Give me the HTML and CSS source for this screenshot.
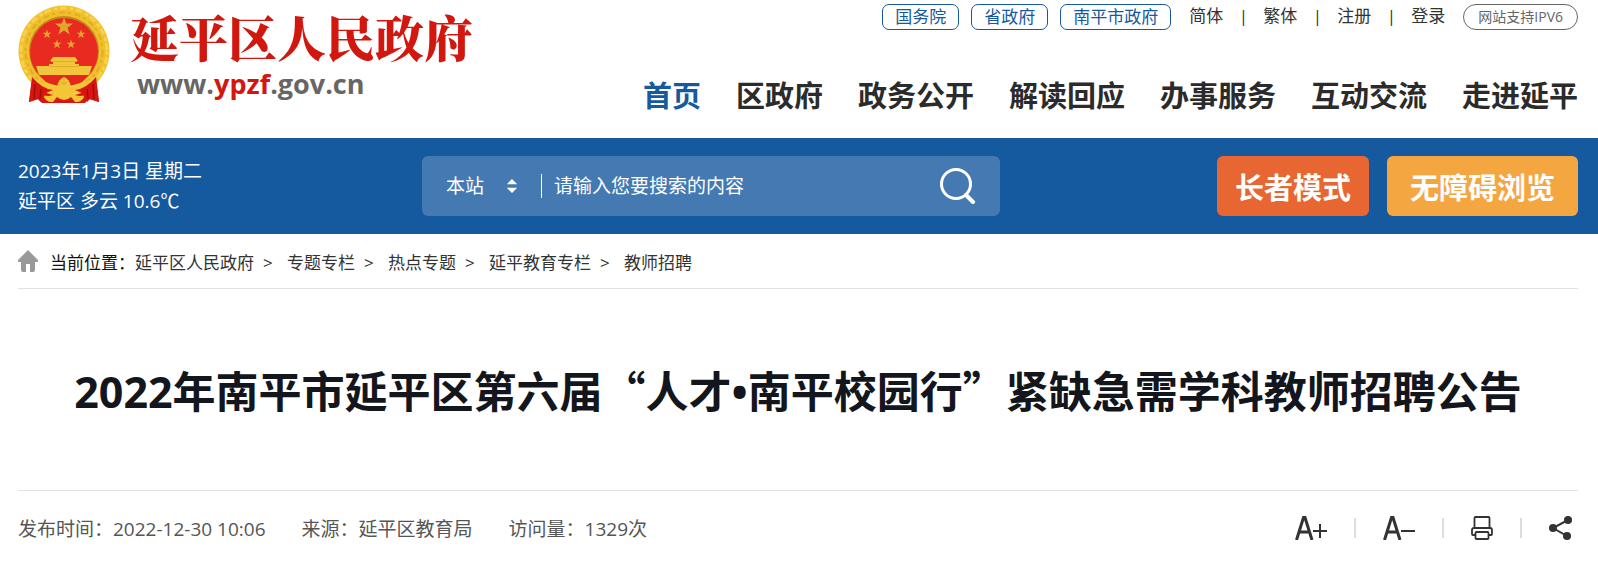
FILE: index.html
```html
<!DOCTYPE html>
<html lang="zh-CN">
<head>
  <meta charset="utf-8">
  <meta name="viewport" content="width=device-width, initial-scale=1.0">
  <title>2022年南平市延平区第六届“人才•南平校园行”紧缺急需学科教师招聘公告</title>
  <link rel="stylesheet" href="styles.css">
</head>
<body>

  <header class="header wrap">
    <a class="logo" href="#">
      <svg class="emblem" viewBox="0 0 92 98" aria-hidden="true">
        <path d="M14 74 L32 76 L60 76 L78 74 L81 97 L71 94 L67 98 L24 98 L20 94 L11 97 Z" fill="#d8150f"/>
        <circle cx="46" cy="46" r="45.500" fill="#efbf2e"/>
        <circle cx="46" cy="46" r="43" fill="none" stroke="#f7d24a" stroke-width="3" stroke-dasharray="4 2 7 3"/>
        <circle cx="46" cy="46" r="38.500" fill="none" stroke="#e3ab22" stroke-width="2" stroke-dasharray="6 3 3 4"/>
        <circle cx="46" cy="46" r="35" fill="#c08a1c"/>
        <circle cx="46" cy="47" r="34" fill="#e92a20"/>
        <g fill="#dfa52c">
          <path id="star" d="M46 12 L48.200 18.500 L55 18.600 L49.600 22.700 L51.600 29.400 L46 25.400 L40.400 29.400 L42.400 22.700 L37 18.600 L43.800 18.500 Z"/>
          <use href="#star" transform="translate(6 18.500) scale(.5)"/>
          <use href="#star" transform="translate(40 18.500) scale(.5)"/>
          <use href="#star" transform="translate(16 28.500) scale(.5)"/>
          <use href="#star" transform="translate(30 28.500) scale(.5)"/>
        </g>
        <path d="M35 52 H57 L60 56 H57 V59 H61 V61 H74 L71 70 H21 L18 61 H31 V59 H35 V56 H32 Z" fill="#f2c53b"/>
        <path d="M33 56.500 H59 M31 61.500 H61" stroke="#e3ab2c" stroke-width="1"/>
        <path d="M21 70 H71 L64 77 Q46 85 28 77 Z" fill="#e5261c"/>
        <path d="M12 70 Q24 79 39 81 Q41 74 46 72 Q51 74 53 81 Q68 79 80 70 L76 80 Q64 88 54 88 L46 91 L38 88 Q28 88 16 80 Z" fill="#f4c636"/>
        <path d="M46 80 L41 75 M46 80 V74 M46 80 L51 75" stroke="#dfa52c" stroke-width="1"/>
        <path d="M25 90 Q35 93 40 86 Q46 92 52 86 Q57 93 67 90 Q64 98 57 97 L53 92 Q46 98 39 92 L35 97 Q28 98 25 90 Z" fill="#f4c636"/>
        <path d="M14 72 Q24 84 35 85 L28 88 L23 97 L20 94 L11 97 Z" fill="#d8150f"/>
        <path d="M78 72 Q68 84 57 85 L64 88 L69 97 L72 94 L81 97 Z" fill="#d8150f"/>
        <path d="M17 79 L16 94 M23 84 L22 94 M75 79 L76 94 M69 84 L70 94" stroke="#a30d0a" stroke-width="1.500"/>
      </svg>
      <span class="logo-text">
        <span class="logo-name">延平区人民政府</span>
        <span class="logo-url">www.<em>ypzf</em>.gov.cn</span>
      </span>
    </a>
    <div class="header-right">
      <div class="top-links">
        <a class="box-link" href="#">国务院</a>
        <a class="box-link" href="#">省政府</a>
        <a class="box-link" href="#">南平市政府</a>
        <ul class="text-links">
          <li><a href="#">简体</a></li>
          <li><a href="#">繁体</a></li>
          <li><a href="#">注册</a></li>
          <li><a href="#">登录</a></li>
        </ul>
        <a class="ipv6" href="#">网站支持IPV6</a>
      </div>
      <nav class="nav">
        <a class="current" href="#">首页</a>
        <a href="#">区政府</a>
        <a href="#">政务公开</a>
        <a href="#">解读回应</a>
        <a href="#">办事服务</a>
        <a href="#">互动交流</a>
        <a href="#">走进延平</a>
      </nav>
    </div>
  </header>

  <div class="bar">
    <div class="bar-main wrap">
      <div class="weather">
        <p>2023年1月3日 星期二</p>
        <p>延平区 多云 10.6℃</p>
      </div>
      <form class="search">
        <div class="scope">
          <select class="scope-select" aria-label="搜索范围">
            <option>本站</option>
          </select>
          <svg class="scope-arrow" viewBox="0 0 12 16" aria-hidden="true">
            <path d="M6 0 L12 6 H0 Z M0 10 H12 L6 16 Z" fill="#fff"/>
          </svg>
        </div>
        <input class="search-input" type="text" placeholder="请输入您要搜索的内容" aria-label="搜索内容">
        <button class="search-btn" type="submit" aria-label="搜索">
          <svg viewBox="0 0 36 36" aria-hidden="true">
            <circle cx="16" cy="16" r="14.500" fill="none" stroke="#fff" stroke-width="3"/>
            <path d="M26 27 L33 34" stroke="#fff" stroke-width="4" stroke-linecap="round"/>
          </svg>
        </button>
      </form>
      <div class="modes">
        <button class="mode elder" type="button">长者模式</button>
        <button class="mode access" type="button">无障碍浏览</button>
      </div>
    </div>
  </div>

  <main class="wrap">
    <div class="crumbs">
      <svg class="home" viewBox="0 0 20 22" aria-hidden="true">
        <path d="M10 0 L20 10 V12 H17 V20 Q17 22 15 22 H12 V14 H8 V22 H5 Q3 22 3 20 V12 H0 V10 Z" fill="#999"/>
      </svg>
      <span class="crumbs-label">当前位置：</span>
      <ol class="crumbs-list">
        <li><a href="#">延平区人民政府</a></li>
        <li><a href="#">专题专栏</a></li>
        <li><a href="#">热点专题</a></li>
        <li><a href="#">延平教育专栏</a></li>
        <li><a href="#">教师招聘</a></li>
      </ol>
    </div>

    <h1 class="title">2022年南平市延平区第六届<span class="quote">“</span>人才•南平校园行<span class="quote">”</span>紧缺急需学科教师招聘公告</h1>

    <div class="meta">
      <ul class="info">
        <li>发布时间：2022-12-30 10:06</li>
        <li>来源：延平区教育局</li>
        <li>访问量：1329次</li>
      </ul>
      <ul class="tools">
        <li>
          <button type="button" aria-label="放大字体">
            <svg width="32" height="24" viewBox="0 0 32 24" fill="none" stroke="#333" stroke-width="3">
              <path d="M1.500 24 L8.500 1.500 H10 L17 24 M4 16 H14.500"/>
              <path d="M18 15 H32 M25 8 V22" stroke-width="2"/>
            </svg>
          </button>
        </li>
        <li>
          <button type="button" aria-label="缩小字体">
            <svg width="32" height="24" viewBox="0 0 32 24" fill="none" stroke="#333" stroke-width="3">
              <path d="M1.500 24 L8.500 1.500 H10 L17 24 M4 16 H14.500"/>
              <path d="M18 15 H32" stroke-width="2"/>
            </svg>
          </button>
        </li>
        <li>
          <button type="button" aria-label="打印">
            <svg width="22" height="24" viewBox="0 0 22 24" fill="none" stroke="#333" stroke-width="1.800">
              <path d="M3.500 12 V2 Q3.500 1 4.500 1 H17.500 Q18.500 1 18.500 2 V12"/>
              <path d="M4.500 19 H2 Q1 19 1 18 V14 Q1 12 3 12 H19 Q21 12 21 14 V18 Q21 19 20 19 H17.500"/>
              <rect x="4.500" y="16" width="13" height="7" rx="1"/>
            </svg>
          </button>
        </li>
        <li>
          <button type="button" aria-label="分享">
            <svg width="23" height="24" viewBox="0 0 23 24">
              <path d="M19 4 L4 12 L18 20" fill="none" stroke="#333" stroke-width="2"/>
              <g fill="#333"><circle cx="19" cy="4" r="4"/><circle cx="4" cy="12" r="4"/><circle cx="18" cy="20" r="4"/></g>
            </svg>
          </button>
        </li>
      </ul>
    </div>
  </main>

</body>
</html>
```
FILE: styles.css
```css
html,
body,
ul,
ol,
p,
h1 {
  margin: 0;
  padding: 0;
}
body {
  font-family: "Open Sans", "Noto Sans CJK SC", sans-serif;
  font-size: 19px;
  color: #333;
  background: #fff;
}
ul,
ol {
  list-style-type: none;
}
a {
  color: inherit;
  text-decoration: none;
}
button,
input,
select {
  margin: 0;
  padding: 0;
  border: 0;
  background: none;
  font: inherit;
  color: inherit;
}
button {
  cursor: pointer;
}
svg {
  display: block;
}
.wrap {
  padding: 0 20px 0 18px;
}

/* header */
.header {
  display: flex;
  justify-content: space-between;
  height: 138px;
}
.logo {
  display: flex;
  align-items: flex-start;
  gap: 20px;
  padding-top: 5px;
}
.emblem {
  width: 92px;
  height: 98px;
}
.logo-text {
  display: flex;
  flex-direction: column;
}
.logo-name {
  font-family: "Noto Serif CJK SC", "Noto Sans CJK SC", serif;
  font-size: 49px;
  font-weight: 900;
  line-height: 62px;
  color: #d2170f;
}
.logo-url {
  padding-left: 7px;
  font-size: 27px;
  font-weight: bold;
  line-height: 34px;
  color: #666;
}
.logo-url em {
  font-style: normal;
  color: #d2170f;
}
.header-right {
  display: flex;
  flex-direction: column;
  align-items: flex-end;
  padding-top: 4px;
}
.top-links {
  display: flex;
  gap: 12px;
  font-size: 17px;
  line-height: 24px;
}
.box-link {
  padding: 0 12px;
  border: 1px solid #15599f;
  border-radius: 7px;
  color: #15599f;
}
.text-links {
  display: flex;
  padding: 0 6px;
}
.text-links li + li::before {
  content: "|";
  display: inline-block;
  width: 40px;
  text-align: center;
}
.ipv6 {
  padding: 0 14px;
  border: 1px solid #666;
  border-radius: 13px;
  font-size: 14px;
  color: #666;
}
.nav {
  display: flex;
  gap: 35px;
  margin-top: 44px;
  font-size: 29px;
  font-weight: bold;
  line-height: 44px;
  color: #2b2b2b;
}
.nav .current {
  color: #15599f;
}

/* blue bar */
.bar {
  background: #15599f;
  color: #fff;
}
.bar-main {
  display: grid;
  grid-template-columns: 386px minmax(400px, 578px) 1fr;
  align-items: center;
  padding-top: 18px;
  padding-bottom: 18px;
}
.weather {
  line-height: 30px;
}
.search {
  display: flex;
  align-items: center;
  margin-left: 18px;
  margin-right: -18px;
  height: 60px;
  border-radius: 6px;
  background: #4579b2;
}
.scope {
  display: flex;
  align-items: center;
  height: 24px;
  padding-left: 24px;
  padding-right: 23px;
  border-right: 1px solid #fff;
}
.scope-select {
  width: 60px;
  appearance: none;
  outline: none;
}
.scope-select option {
  color: #333;
}
.scope-arrow {
  width: 12px;
  height: 14px;
}
.search-input {
  flex: 1;
  min-width: 0;
  height: 40px;
  padding-left: 12px;
  outline: none;
}
.search-input::placeholder {
  color: #fff;
  opacity: 1;
}
.search-btn {
  padding: 0 24px;
}
.search-btn svg {
  width: 36px;
  height: 36px;
}
.modes {
  display: flex;
  justify-content: flex-end;
  gap: 18px;
}
.mode {
  height: 60px;
  border-radius: 6px;
  font-size: 29px;
  font-weight: bold;
}
.elder {
  padding: 0 18px;
  background: #e86632;
}
.access {
  padding: 0 23px;
  background: #f4a640;
}

/* breadcrumb */
.crumbs {
  display: flex;
  align-items: center;
  height: 54px;
  border-bottom: 1px solid #e2e2e2;
  font-size: 17px;
}
.home {
  width: 20px;
  height: 22px;
  margin-right: 12px;
}
.crumbs-label {
  color: #111;
}
.crumbs-list {
  display: flex;
}
.crumbs-list li + li::before {
  content: ">";
  display: inline-block;
  width: 33px;
  padding-left: 9px;
  box-sizing: border-box;
}

/* article */
.title {
  padding: 70px 0 68px;
  border-bottom: 1px solid #e2e2e2;
  font-size: 43px;
  line-height: 60px;
  text-align: center;
  color: #13161c;
}
.quote {
  font-family: "Noto Sans CJK SC", sans-serif;
}
.meta {
  display: flex;
  justify-content: space-between;
  align-items: center;
  height: 74px;
  color: #555;
}
.info {
  display: flex;
  gap: 36px;
}
.tools {
  display: flex;
  align-items: center;
  padding-right: 6px;
}
.tools li {
  display: flex;
  align-items: center;
}
.tools li + li::before {
  content: "";
  width: 2px;
  height: 20px;
  margin: 0 27px;
  background: #dcdce2;
}
```
